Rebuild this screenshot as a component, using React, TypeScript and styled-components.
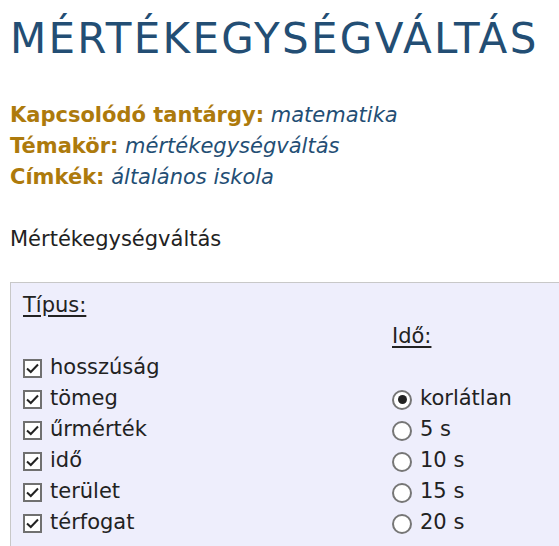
import styled, { createGlobalStyle } from 'styled-components';

const GlobalStyle = createGlobalStyle`
    html, body {
        margin: 0;
        background: #ffffff;
    }
    body {
        font-family: "DejaVu Sans", Verdana, sans-serif;
        color: #222222;
        overflow: hidden;
    }
`;

const Page = styled.div`
    padding: 0 0 0 10px;
`;

const Title = styled.h1`
    margin: 0;
    padding-top: 14px;
    font-size: 42px;
    font-weight: normal;
    line-height: 50px;
    letter-spacing: 2.3px;
    color: #234e74;
    white-space: nowrap;
`;

const Meta = styled.div`
    margin-top: 36px;
    font-size: 21px;
    line-height: 31px;
`;

const MetaLine = styled.div`
    white-space: nowrap;
`;

const Label = styled.b`
    color: #ad7a0c;
`;

const Value = styled.i`
    color: #234e74;
`;

const Intro = styled.p`
    margin: 31px 0 0;
    font-size: 21px;
    line-height: 31px;
    color: #222222;
`;

const Panel = styled.div`
    margin-top: 27px;
    background: #eeeefc;
    border-top: 1px solid #c8c8c8;
    border-left: 1px solid #c8c8c8;
    padding: 7px 0 20px 12px;
    display: flex;
    align-items: flex-end;
    font-size: 21px;
    line-height: 31px;
`;

const Column = styled.div<{ width?: number }>`
    width: ${(p) => (p.width ? `${p.width}px` : 'auto')};
    display: flex;
    flex-direction: column;
`;

const Heading = styled.div`
    text-decoration: underline;
    text-underline-offset: 3px;
    margin-bottom: 31px;
`;

const Option = styled.label`
    display: flex;
    align-items: center;
    gap: 8px;
    white-space: nowrap;
    height: 31px;
`;

const Box = styled.span`
    width: 19px;
    height: 19px;
    box-sizing: border-box;
    border: 2px solid #707070;
    background: #ffffff;
    display: inline-flex;
    align-items: center;
    justify-content: center;
    flex-shrink: 0;
    margin-top: 2px;
`;

const Radio = styled.span<{ checked?: boolean }>`
    width: 20px;
    height: 20px;
    box-sizing: border-box;
    border: 2px solid #767676;
    border-radius: 50%;
    background: #ffffff;
    display: inline-flex;
    align-items: center;
    justify-content: center;
    flex-shrink: 0;
    margin-top: 2px;

    &::after {
        content: '';
        width: 9px;
        height: 9px;
        border-radius: 50%;
        background: #222222;
        display: ${(p) => (p.checked ? 'block' : 'none')};
    }
`;

const types = ['hosszúság', 'tömeg', 'űrmérték', 'idő', 'terület', 'térfogat'];
const times = ['korlátlan', '5 s', '10 s', '15 s', '20 s'];

function Check() {
    return (
        <svg width="13" height="11" viewBox="0 0 13 11">
            <path d="M1 5.5 L4.8 9 L12 1.5" fill="none" stroke="#222" strokeWidth="2" />
        </svg>
    );
}

function App() {
    return (
        <Page>
            <GlobalStyle />
            <Title>MÉRTÉKEGYSÉGVÁLTÁS</Title>
            <Meta>
                <MetaLine>
                    <Label>Kapcsolódó tantárgy:</Label> <Value>matematika</Value>
                </MetaLine>
                <MetaLine>
                    <Label>Témakör:</Label> <Value>mértékegységváltás</Value>
                </MetaLine>
                <MetaLine>
                    <Label>Címkék:</Label> <Value>általános iskola</Value>
                </MetaLine>
            </Meta>
            <Intro>Mértékegységváltás</Intro>
            <Panel>
                <Column width={369}>
                    <Heading>Típus:</Heading>
                    {types.map((t) => (
                        <Option key={t}>
                            <Box>
                                <Check />
                            </Box>
                            {t}
                        </Option>
                    ))}
                </Column>
                <Column>
                    <Heading>Idő:</Heading>
                    {times.map((t, i) => (
                        <Option key={t}>
                            <Radio checked={i === 0} />
                            {t}
                        </Option>
                    ))}
                </Column>
            </Panel>
        </Page>
    );
}

export default App;
